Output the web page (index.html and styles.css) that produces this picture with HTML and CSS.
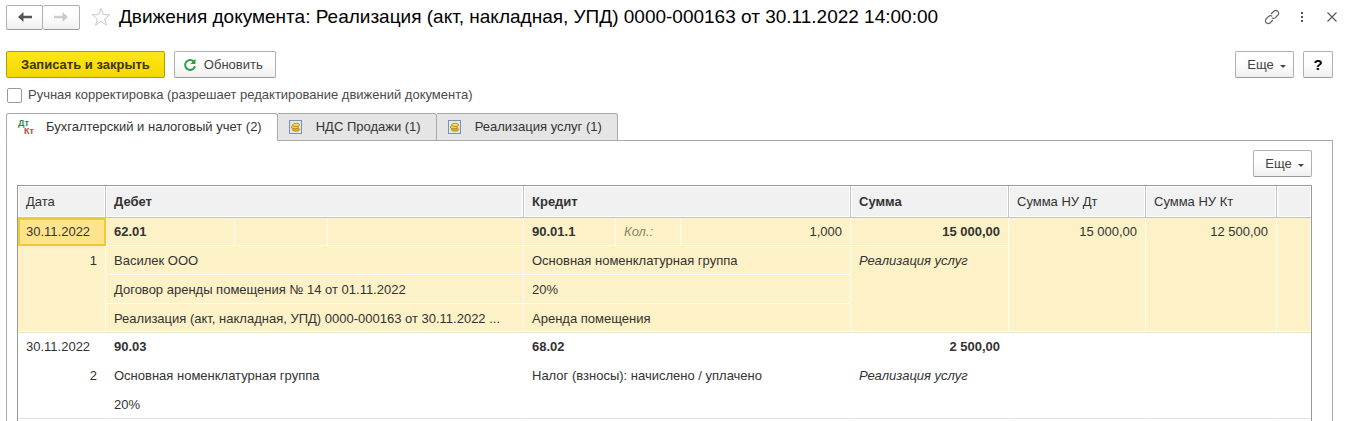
FILE: index.html
```html
<!DOCTYPE html>
<html lang="ru">
<head>
  <meta charset="UTF-8">
  <meta name="viewport" content="width=device-width, initial-scale=1.0">
  <title>Движения документа</title>
  <link rel="stylesheet" href="styles.css">
</head>
<body>
  <header class="header">
    <div class="nav">
      <button type="button" class="btn nav-btn" aria-label="Назад">
        <svg width="14" height="10" viewBox="0 0 14 10"><path d="M0 5 L5.5 0 V3.8 H14 V6.2 H5.5 V10 Z" fill="#555"/></svg>
      </button>
      <button type="button" class="btn nav-btn" aria-label="Вперед">
        <svg width="14" height="10" viewBox="0 0 14 10"><path d="M14 5 L8.5 0 V3.8 H0 V6.2 H8.5 V10 Z" fill="#ccc"/></svg>
      </button>
    </div>
    <button type="button" class="icon-btn star" aria-label="В избранное">
      <svg width="20" height="20" viewBox="0 0 20 20"><path d="M10 1.5 L12.2 7.6 L18.7 7.8 L13.6 11.8 L15.4 18.1 L10 14.4 L4.6 18.1 L6.4 11.8 L1.3 7.8 L7.8 7.6 Z" fill="#fff" stroke="#c8c8c8"/></svg>
    </button>
    <h1>Движения документа: Реализация (акт, накладная, УПД) 0000-000163 от 30.11.2022 14:00:00</h1>
    <div class="window-tools">
      <button type="button" class="icon-btn" aria-label="Ссылка">
        <svg width="16" height="16" viewBox="0 0 16 16"><g transform="rotate(-45 8 8)" fill="none" stroke="#666" stroke-width="1.2"><path d="M6.5 10.8 H2.7 A2.8 2.8 0 0 1 2.7 5.2 H6 A2.8 2.8 0 0 1 8.7 7.6"/><path d="M9.5 5.2 H13.3 A2.8 2.8 0 0 1 13.3 10.8 H10 A2.8 2.8 0 0 1 7.3 8.4"/></g></svg>
      </button>
      <button type="button" class="icon-btn" aria-label="Меню">
        <svg width="16" height="16" viewBox="0 0 16 16"><path d="M7 3h2v2H7z M7 7h2v2H7z M7 11h2v2H7z" fill="#555"/></svg>
      </button>
      <button type="button" class="icon-btn" aria-label="Закрыть">
        <svg width="16" height="16" viewBox="0 0 16 16"><path d="M3.5 3.5 L12.5 12.5 M12.5 3.5 L3.5 12.5" fill="none" stroke="#555" stroke-width="1.1"/></svg>
      </button>
    </div>
  </header>

  <div class="toolbar">
    <button type="button" class="btn btn-main">Записать и закрыть</button>
    <button type="button" class="btn btn-refresh">
      <svg width="14" height="14" viewBox="0 0 14 14"><path d="M10.8 3.5 A5 5 0 1 0 12 8.2" fill="none" stroke="#2f9e44" stroke-width="2"/><path d="M12.5 0.8 V6 H7.3 Z" fill="#2f9e44"/></svg>
      Обновить
    </button>
    <div class="spacer"></div>
    <button type="button" class="btn btn-more">Еще <span class="caret"></span></button>
    <button type="button" class="btn btn-help">?</button>
  </div>

  <div class="manual">
    <input type="checkbox" id="manual">
    <label for="manual">Ручная корректировка (разрешает редактирование движений документа)</label>
  </div>

  <div class="tabs" role="tablist">
    <button type="button" class="tab active" role="tab" aria-selected="true">
      <span class="dtkt"><span class="dt">Дт</span><span class="kt">Кт</span></span>
      Бухгалтерский и налоговый учет (2)
    </button>
    <button type="button" class="tab" role="tab" aria-selected="false">
      <svg width="13" height="14" viewBox="0 0 13 14"><rect x="0.5" y="0.5" width="12" height="13" fill="#dfe8f2" stroke="#7d91aa"/><ellipse cx="7" cy="9.5" rx="3.7" ry="1.7" fill="#e3b21c" stroke="#a87810" stroke-width="0.7"/><ellipse cx="5.8" cy="7.1" rx="3.6" ry="1.7" fill="#f3d04a" stroke="#a87810" stroke-width="0.7"/><ellipse cx="7.2" cy="4.9" rx="3.5" ry="1.6" fill="#f8dc5c" stroke="#a87810" stroke-width="0.7"/></svg>
      НДС Продажи (1)
    </button>
    <button type="button" class="tab" role="tab" aria-selected="false">
      <svg width="13" height="14" viewBox="0 0 13 14"><rect x="0.5" y="0.5" width="12" height="13" fill="#dfe8f2" stroke="#7d91aa"/><ellipse cx="7" cy="9.5" rx="3.7" ry="1.7" fill="#e3b21c" stroke="#a87810" stroke-width="0.7"/><ellipse cx="5.8" cy="7.1" rx="3.6" ry="1.7" fill="#f3d04a" stroke="#a87810" stroke-width="0.7"/><ellipse cx="7.2" cy="4.9" rx="3.5" ry="1.6" fill="#f8dc5c" stroke="#a87810" stroke-width="0.7"/></svg>
      Реализация услуг (1)
    </button>
  </div>

  <main class="panel">
    <div class="panel-bar">
      <button type="button" class="btn btn-more">Еще <span class="caret"></span></button>
    </div>
    <div class="grid">
      <table>
        <colgroup>
          <col class="c-date">
          <col class="c-acc">
          <col class="c-sub">
          <col>
          <col class="c-acc-kt">
          <col class="c-kol">
          <col class="c-qty">
          <col class="c-sum">
          <col class="c-nu-dt">
          <col class="c-nu-kt">
          <col class="c-end">
        </colgroup>
        <thead>
          <tr>
            <th>Дата</th>
            <th colspan="3" class="b">Дебет</th>
            <th colspan="3" class="b">Кредит</th>
            <th class="b">Сумма</th>
            <th>Сумма НУ Дт</th>
            <th>Сумма НУ Кт</th>
            <th></th>
          </tr>
        </thead>
        <tbody class="selected">
          <tr class="first">
            <td class="current">30.11.2022</td>
            <td class="b">62.01</td>
            <td></td>
            <td></td>
            <td class="b">90.01.1</td>
            <td class="hint">Кол.:</td>
            <td class="num">1,000</td>
            <td class="num b">15 000,00</td>
            <td class="num top" rowspan="4">15 000,00</td>
            <td class="num top" rowspan="4">12 500,00</td>
            <td rowspan="4"></td>
          </tr>
          <tr>
            <td class="num top" rowspan="3">1</td>
            <td colspan="3">Василек ООО</td>
            <td colspan="3">Основная номенклатурная группа</td>
            <td class="i top" rowspan="3">Реализация услуг</td>
          </tr>
          <tr>
            <td colspan="3">Договор аренды помещения № 14 от 01.11.2022</td>
            <td colspan="3">20%</td>
          </tr>
          <tr>
            <td colspan="3">Реализация (акт, накладная, УПД) 0000-000163 от 30.11.2022 ...</td>
            <td colspan="3">Аренда помещения</td>
          </tr>
        </tbody>
        <tbody>
          <tr class="first">
            <td>30.11.2022</td>
            <td colspan="3" class="b">90.03</td>
            <td colspan="3" class="b">68.02</td>
            <td class="num b">2 500,00</td>
            <td rowspan="3"></td>
            <td rowspan="3"></td>
            <td rowspan="3"></td>
          </tr>
          <tr>
            <td class="num top" rowspan="2">2</td>
            <td colspan="3">Основная номенклатурная группа</td>
            <td colspan="3">Налог (взносы): начислено / уплачено</td>
            <td class="i top" rowspan="2">Реализация услуг</td>
          </tr>
          <tr>
            <td colspan="3">20%</td>
            <td colspan="3"></td>
          </tr>
        </tbody>
      </table>
    </div>
  </main>
</body>
</html>
```

FILE: styles.css
```css
* {
  box-sizing: border-box;
}

body {
  display: flex;
  flex-direction: column;
  height: 100vh;
  margin: 0;
  padding: 4px 14px 0 6px;
  overflow: hidden;
  background: #fff;
  color: #333;
  font: 13px/16px "Liberation Sans", Arial, sans-serif;
}

button {
  padding: 0;
  color: inherit;
  font: inherit;
  cursor: pointer;
}

svg {
  display: block;
  flex: none;
}

/* Заголовок */
.header {
  display: flex;
  align-items: center;
  height: 26px;
}

h1 {
  margin: 0;
  color: #000;
  font-size: 19px;
  font-weight: normal;
  line-height: 24px;
  white-space: nowrap;
}

.nav {
  display: flex;
}

.btn {
  display: flex;
  align-items: center;
  justify-content: center;
  height: 27px;
  border: 1px solid #b0b0b0;
  border-bottom-color: #999;
  border-radius: 2px;
  background: linear-gradient(#fff 40%, #f0f0f0);
  color: #444;
}

.nav-btn {
  width: 37px;
  height: 25px;
}

.nav-btn + .nav-btn {
  border-left: 0;
}

.icon-btn {
  border: 0;
  background: none;
}

.star {
  margin: 0 8px 0 11px;
}

.window-tools {
  display: flex;
  gap: 14px;
  margin-left: auto;
  margin-right: -7px;
}

/* Командная панель */
.toolbar {
  display: flex;
  gap: 9px;
  margin-top: 21px;
}

.spacer {
  flex: 1;
}

.btn-main {
  padding: 0 14px;
  border-color: #b39c00;
  background: linear-gradient(#ffe619, #f5d800);
  color: #3c3600;
  font-weight: bold;
}

.btn-refresh {
  gap: 7px;
  padding: 0 12px 0 8px;
}

.btn-more {
  gap: 6px;
  width: 59px;
  padding-left: 4px;
}

.caret {
  margin-top: 4px;
  border: 3px solid transparent;
  border-top-color: #444;
  border-bottom: 0;
}

.btn-help {
  width: 30px;
  color: #000;
  font-size: 15px;
  font-weight: bold;
}

.manual {
  display: flex;
  align-items: center;
  gap: 6px;
  margin: 8px 0 9px 1px;
  height: 18px;
  color: #4a4a4a;
}

.manual input {
  width: 15px;
  height: 15px;
  margin: 0;
  border: 1px solid #999;
  border-radius: 2px;
  appearance: none;
  background: #fff;
}

/* Закладки */
.tabs {
  display: flex;
  position: relative;
  margin-bottom: -1px;
}

.tab {
  display: flex;
  align-items: center;
  gap: 14px;
  height: 28px;
  padding: 0 15px 0 11px;
  border: 1px solid #aaa;
  border-left: 0;
  border-radius: 0 3px 0 0;
  background: #e5e5e5;
}

.tab.active {
  gap: 12px;
  border-left: 1px solid #aaa;
  border-bottom-color: #fff;
  border-radius: 3px 3px 0 0;
  background: #fff;
}

.dtkt {
  display: flex;
  flex-direction: column;
  width: 16px;
  font-size: 9px;
  font-weight: bold;
  line-height: 8px;
}

.dt {
  align-self: flex-start;
  color: #1a8f4c;
}

.kt {
  align-self: flex-end;
  color: #c8453c;
}

.panel {
  display: flex;
  flex: 1;
  flex-direction: column;
  min-height: 0;
  padding: 9px 20px 0 10px;
  border: 1px solid #aaa;
  border-bottom: 0;
}

.panel-bar {
  display: flex;
  justify-content: flex-end;
  margin-bottom: 8px;
}

/* Таблица проводок */
.grid {
  flex: 1;
  min-height: 0;
  border: 1px solid #999;
  border-bottom: 0;
  overflow: hidden;
}

table {
  width: 100%;
  table-layout: fixed;
  border-collapse: separate;
  border-spacing: 0;
}

.c-date { width: 88px; }
.c-acc { width: 129px; }
.c-sub { width: 93px; }
.c-acc-kt { width: 92px; }
.c-kol { width: 65px; }
.c-qty { width: 170px; }
.c-sum { width: 158px; }
.c-nu-dt { width: 137px; }
.c-nu-kt { width: 131px; }
.c-end { width: 34px; }

th {
  height: 32px;
  padding: 0 8px;
  border-right: 1px solid #c4c4c4;
  border-bottom: 1px solid #c4c4c4;
  background: #f1f1f1;
  box-shadow: inset 0 0 0 1px #fff;
  font-weight: normal;
  text-align: left;
}

th:last-child {
  border-right: 0;
}

td {
  height: 29px;
  padding: 2px 8px 0;
  border-right: 1px solid transparent;
  border-bottom: 1px solid transparent;
  overflow: hidden;
  text-overflow: ellipsis;
  white-space: nowrap;
}

.top {
  padding-top: 7px;
  vertical-align: top;
}

.first td {
  height: 28px;
  padding-top: 0;
}

.first .top {
  padding-top: 6px;
}

.selected td {
  border-color: #fffdf5;
  background: #fdf1c7;
}

tbody tr:last-child td,
td[rowspan] {
  border-bottom-color: #e0e0e0;
}

.selected tr:last-child td,
.selected td[rowspan] {
  border-bottom-color: #e8e0d0;
  box-shadow: inset 0 -1px #fff;
}

.selected .current {
  padding: 0 6px;
  border: 2px solid #efc83c;
  background: #ffe48c;
}

.b {
  font-weight: bold;
}

.i {
  font-style: italic;
}

.hint {
  color: #8a8468;
  font-style: italic;
}

.num {
  text-align: right;
}
```
